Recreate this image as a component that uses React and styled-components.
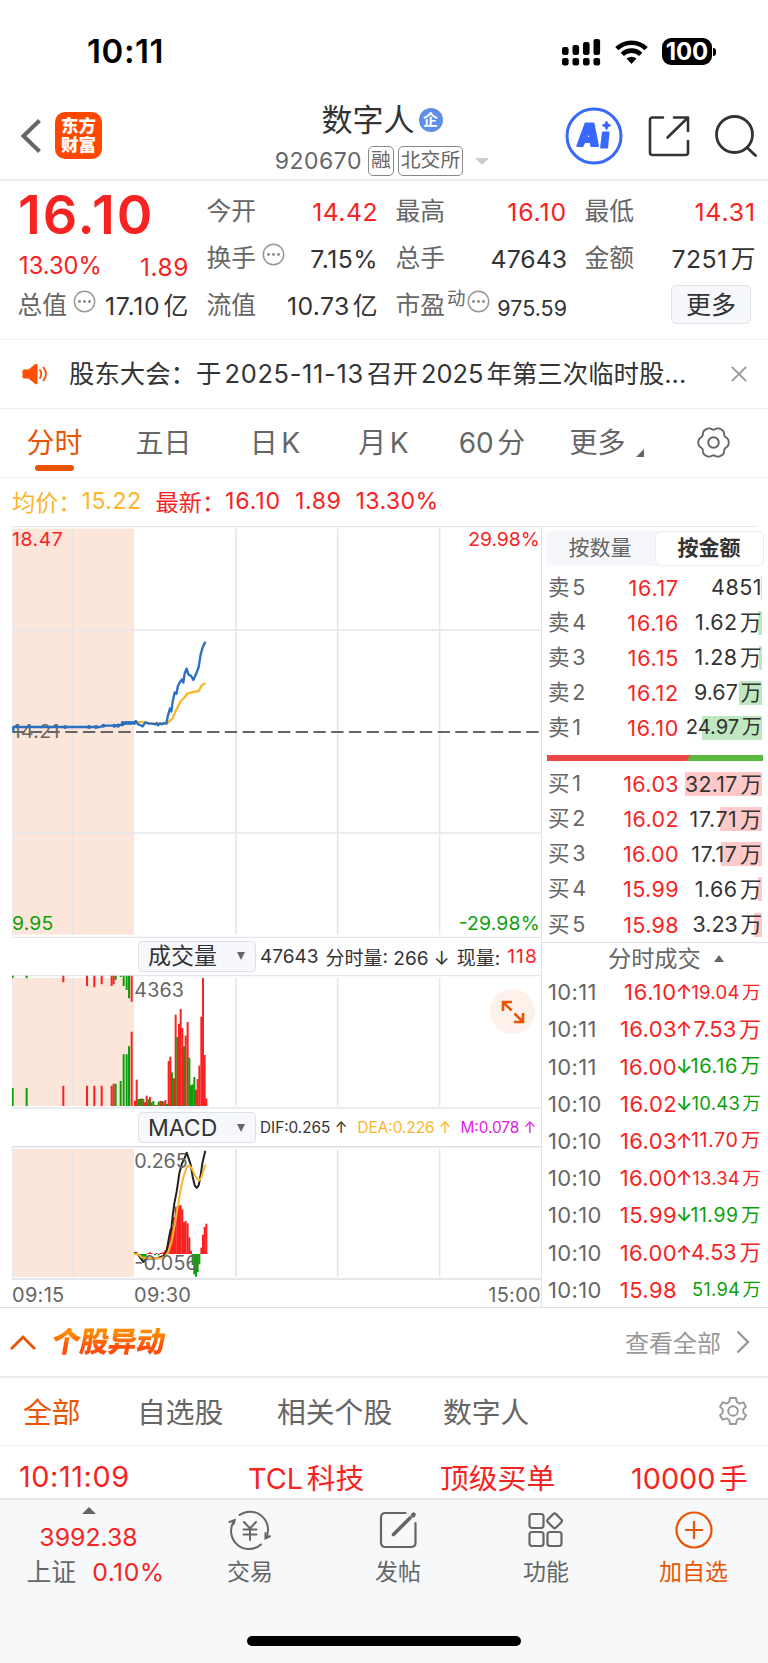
import React from 'react';
import styled, { createGlobalStyle } from 'styled-components';

const RED = '#f72323';
const GREEN = '#0b9f0b';
const ORANGE = '#ea5504';
const GREY = '#666';
const GRID = '#e3e6ec';

const GlobalStyle = createGlobalStyle`
  * {
    box-sizing: border-box;
  }
  body {
    margin: 0;
    background: #fff;
    color: #333;
    font-family: Inter, 'Noto Sans CJK SC', sans-serif;
    text-autospace: normal;
  }
`;

const Page = styled.div`
  display: flex;
  flex-direction: column;
  width: 768px;
  height: 1663px;
  overflow: hidden;
  background: #fff;
  white-space: nowrap;
`;

const Row = styled.div`
  display: flex;
  align-items: center;
`;

const Digits = styled.span`
  letter-spacing: ${props => props.$tracking}em;
`;

/* status bar */

const StatusBar = styled.div`
  display: flex;
  align-items: center;
  justify-content: space-between;
  height: 91px;
  padding: 12px 52px 0 87px;
  flex-shrink: 0;
`;

const Clock = styled.div`
  color: #000;
  font-size: 33px;
  font-weight: 600;
  letter-spacing: 0.6px;
  line-height: 40px;
  padding-bottom: 1px;
`;

const Battery = styled.div`
  display: flex;
  align-items: center;
  justify-content: center;
  width: 50px;
  height: 27px;
  margin-left: 13px;
  border-radius: 9px;
  background: #000;
  color: #fff;
  font-size: 24px;
  font-weight: 700;
  letter-spacing: -0.1px;
`;

const BatteryTip = styled.div`
  width: 3px;
  height: 8px;
  margin-left: 1px;
  border-radius: 0 3px 3px 0;
  background: #000;
`;

/* header */

const Header = styled.div`
  display: grid;
  grid-template-columns: 200px 364px 204px;
  height: 90px;
  border-bottom: 2px solid #ebebeb;
  flex-shrink: 0;
`;

const HeaderLeft = styled.div`
  display: flex;
  align-items: center;
  padding: 1px 0 0 20px;
  gap: 13px;
`;

const AppLogo = styled.div`
  width: 47px;
  height: 47px;
  padding-top: 4px;
  border-radius: 10px;
  background: #ff4700;
  color: #fff;
  font-size: 17.5px;
  font-weight: 900;
  line-height: 19px;
  text-align: center;
`;

const HeaderTitle = styled.div`
  display: flex;
  flex-direction: column;
  align-items: center;
`;

const StockName = styled.div`
  display: flex;
  align-items: center;
  height: 50px;
  padding-top: 2px;
  font-size: 31px;
  gap: 4px;
`;

const Badge = styled.span`
  width: 24px;
  height: 24px;
  margin-top: 5px;
  border-radius: 50%;
  background: #5f8ee8;
  color: #fff;
  font-size: 15px;
  font-weight: 700;
  line-height: 23px;
  text-align: center;
`;

const StockCode = styled.div`
  display: flex;
  align-items: center;
  height: 30px;
  margin-top: 5px;
  color: ${GREY};
  font-size: 23px;
`;

const CodeNumber = styled.span`
  margin-right: 6px;
  letter-spacing: 0.5px;
`;

const Tag = styled.span`
  height: 30px;
  padding: 0 2px;
  margin-right: 4px;
  border: 1.5px solid #888;
  border-radius: 5px;
  font-size: 19.8px;
  line-height: 27px;
`;

const Triangle = styled.span`
  width: 0;
  height: 0;
  margin-left: ${props => props.gap || 0}px;
  border-left: ${props => props.size}px solid transparent;
  border-right: ${props => props.size}px solid transparent;
  ${props => (props.up ? 'border-bottom' : 'border-top')}: ${props =>
      props.tall || props.size}px solid ${props => props.color || GREY};
`;

const HeaderTools = styled.div`
  display: flex;
  align-items: center;
  padding: 2px 0 0 1px;
  gap: 25px;
`;

/* quote */

const Quote = styled.div`
  display: grid;
  grid-template-columns: repeat(4, 169px);
  column-gap: 20px;
  height: 159px;
  padding: 7px 13px 0 19px;
  border-bottom: 1px solid #efefef;
  flex-shrink: 0;
`;

const QuoteColumn = styled.div`
  display: flex;
  flex-direction: column;
`;

const BigPrice = styled.div`
  height: 52px;
  margin-left: -1px;
  color: ${RED};
  font-size: 54px;
  font-weight: 600;
  line-height: 54px;
`;

const Change = styled.div`
  display: flex;
  justify-content: space-between;
  height: 42px;
  margin: 0 -1px 0 0;
  padding-top: 4px;
  color: ${RED};
  font-size: 23.7px;
  line-height: 44px;
`;

const ChangeAmount = styled.span`
  font-size: 24.5px;
  line-height: 46px;
`;

const Stat = styled.div`
  display: flex;
  align-items: center;
  height: 47px;
  margin: 0 -1px 0 -1.5px;
  font-size: ${props => props.size || 24.8}px;
  color: ${props => props.color || '#333'};
`;

const StatLabel = styled.span`
  color: ${GREY};
  font-size: 24.8px;
  line-height: 34px;
  padding-bottom: 1px;
`;

const StatValue = styled.span`
  margin-left: auto;
  line-height: 34px;
  padding-top: ${props => props.drop || 0}px;
`;

const Sup = styled.sup`
  margin-left: 2px;
  color: ${GREY};
  font-size: 18.5px;
  line-height: 20px;
  padding-bottom: 15px;
  vertical-align: baseline;
`;

const DotsIcon = styled.svg`
  margin: 0 0 9px ${props => props.$gap}px;
`;

const MoreButton = styled.button`
  width: 80px;
  height: 39px;
  margin: 3px 4px 0 auto;
  padding: 0;
  border: 1.5px solid #e0e2e9;
  border-radius: 5px;
  background: #f7f8fb;
  color: #333;
  font: inherit;
  font-size: 25px;
  line-height: 34px;
`;

/* notice */

const Notice = styled.div`
  display: flex;
  align-items: center;
  height: 69px;
  padding: 0 21px 0 22px;
  border-bottom: 1px solid #efefef;
  flex-shrink: 0;
`;

const NoticeText = styled.div`
  margin: -4px auto 0 21px;
  font-size: 25.4px;
`;

/* period tabs */

const Tabs = styled.div`
  display: grid;
  grid-template-columns: 109px 109px 114px 103px 114px 97px 122px;
  height: 69px;
  border-bottom: 1px solid #efefef;
  flex-shrink: 0;
`;

const Tab = styled.div`
  display: flex;
  flex-direction: column;
  align-items: center;
  justify-content: center;
  position: relative;
  padding-bottom: 5px;
  color: ${props => (props.active ? ORANGE : GREY)};
  font-size: 28px;

  &::after {
    content: '';
    display: ${props => (props.active ? 'block' : 'none')};
    position: absolute;
    bottom: 6px;
    width: 39px;
    height: 6px;
    border-radius: 3px;
    background: ${ORANGE};
  }
`;

const Corner = styled.span`
  position: absolute;
  right: 2px;
  bottom: 20px;
  border-left: 8px solid transparent;
  border-bottom: 8px solid ${GREY};
`;

const SettingsSlot = styled.div`
  display: flex;
  align-items: center;
  padding: 0 0 2px 51px;
`;

const Legend = styled.div`
  display: flex;
  align-items: center;
  height: 48px;
  padding: 0 0 2px 12px;
  font-size: 23.2px;
  flex-shrink: 0;
`;

const LegendItem = styled.span`
  margin-right: ${props => props.gap || 0}px;
  color: ${props => props.color || RED};
`;

/* chart and order book */

const Main = styled.div`
  display: grid;
  grid-template-columns: 529px 227px;
  height: 782px;
  padding-left: 12px;
  border-bottom: 1px solid #e0e2e8;
  overflow: hidden;
  flex-shrink: 0;
`;

const ChartColumn = styled.div`
  position: relative;
`;

const Pane = styled.svg`
  display: block;
  width: 529px;
  height: ${props => props.$height}px;
`;

const IndicatorBar = styled.div`
  display: flex;
  align-items: center;
  height: 37px;
  padding-left: 126px;
  font-size: ${props => props.size}px;
`;

const Select = styled.div`
  display: flex;
  align-items: center;
  justify-content: space-between;
  width: 118px;
  height: 31px;
  margin-right: 4px;
  padding: 0 10px ${props => props.lift || 0}px 9px;
  border: 1.5px solid #dfe2e9;
  border-radius: 4px;
  background: #f7f8fb;
  font-size: 23px;
  line-height: 26px;
  flex-shrink: 0;
`;

const Reading = styled.span`
  margin-right: ${props => props.gap || 0}px;
  padding-bottom: ${props => props.lift || 0}px;
  color: ${props => props.color || '#333'};
`;

const Expand = styled.div`
  display: flex;
  align-items: center;
  justify-content: center;
  position: absolute;
  left: 478px;
  top: 463px;
  width: 45px;
  height: 45px;
  border-radius: 50%;
  background: #fef1ea;
`;

const TimeAxis = styled.div`
  display: grid;
  grid-template-columns: 122px 1fr auto;
  height: 29px;
  color: ${GREY};
  font-size: 20px;
  line-height: 31px;
  letter-spacing: 0.3px;
`;

const Book = styled.div`
  border-left: 1px solid #e0e2e8;
`;

const BookTop = styled.div`
  width: 215px;
  height: 2px;
  background: linear-gradient(#e3e6ec 1px, transparent 1px);
`;

const Toggle = styled.div`
  display: grid;
  grid-template-columns: 1fr 109px;
  width: 218px;
  height: 35px;
  margin: 3px 0 4px 4px;
  border-radius: 5px;
  background: #f6f7fb;
`;

const ToggleItem = styled.div`
  padding-right: 1px;
  border: 1.5px solid ${props => (props.active ? '#ececee' : 'transparent')};
  border-radius: 6px;
  background: ${props => (props.active ? '#fff' : 'none')};
  color: ${props => (props.active ? '#333' : GREY)};
  font-size: 21px;
  font-weight: ${props => (props.active ? 700 : 400)};
  line-height: 31px;
  text-align: center;
`;

const BookRow = styled.div`
  display: grid;
  grid-template-columns: 51px 80px 83px;
  align-items: center;
  position: relative;
  height: 35.12px;
  padding: 0 0 0 6px;
  font-size: 21.5px;
  line-height: 30px;
`;

const BookLabel = styled.span`
  padding-bottom: 2px;
  color: ${GREY};
`;

const BookPrice = styled.span`
  color: ${RED};
  text-align: right;
`;

const BookVolume = styled.span`
  display: flex;
  justify-content: flex-end;
  position: relative;
  padding-bottom: 1px;
  font-size: ${props => props.size || 21.5}px;
`;

const VolumeBar = styled.span`
  position: absolute;
  right: 6px;
  width: ${props => props.width}px;
  height: 24px;
  background: ${props => (props.buy ? '#fdc9c9' : '#c0e8c0')};
`;

const Ratio = styled.div`
  height: 6px;
  width: 216px;
  margin: 9px 0 6px 5px;
  background: linear-gradient(125deg, #ea4646 65%, #5ab83e 65.5%);
`;

const TradesTitle = styled.div`
  display: flex;
  align-items: center;
  height: 32px;
  padding-left: 66px;
  border-top: 1.5px solid #e0e2e8;
  color: ${GREY};
  font-size: 23.2px;
  line-height: 28px;
  gap: 13px;
`;

const TradeRow = styled.div`
  display: grid;
  grid-template-columns: 52px 77px 14px 70px;
  align-items: center;
  height: 37.2px;
  padding: 0 0 1px 6px;
  color: ${GREY};
  font-size: 22px;
  line-height: 30px;
`;

const TradeTime = styled.span`
  letter-spacing: 0.35px;
`;

const TradePrice = styled.span`
  color: ${RED};
  text-align: right;
`;

const TradeArrow = styled.span`
  display: flex;
  justify-content: center;
  color: ${props => props.color};
  font-size: 19.5px;
  font-weight: 500;
`;

const TradeAmount = styled.span`
  display: flex;
  justify-content: flex-end;
  padding-bottom: 1px;
  color: ${props => props.color};
  font-size: ${props => props.size}px;
`;

/* movers */

const MoversHeader = styled.div`
  display: flex;
  align-items: center;
  height: 70px;
  padding: 0 18px 0 10px;
  border-bottom: 2px solid #ebebed;
  flex-shrink: 0;
`;

const MoversTitle = styled.div`
  margin: 0 auto 0 16px;
  background: linear-gradient(#ff8a00 25%, #ff4e0a 65%);
  background-clip: text;
  color: transparent;
  font-size: 28.7px;
  font-weight: 900;
  letter-spacing: -0.5px;
  line-height: 36px;
  transform: skewX(-10deg);
`;

const SeeAll = styled.span`
  margin: -2px 15px 0 0;
  color: #999;
  font-size: 24px;
`;

const Filters = styled.div`
  display: grid;
  grid-template-columns: 114px 140px 166px 276px auto;
  align-items: center;
  height: 68px;
  padding: 0 0 1px 23px;
  border-bottom: 1px solid #efefef;
  flex-shrink: 0;
`;

const Filter = styled.span`
  padding-bottom: 2px;
  color: ${props => (props.active ? ORANGE : GREY)};
  font-size: 28.8px;
`;

const MoverRow = styled.div`
  display: grid;
  grid-template-columns: 229px 192px 191px 118px;
  align-items: center;
  height: 52px;
  padding: 8px 0 0 19px;
  color: ${RED};
  font-size: 28.8px;
  flex-shrink: 0;
`;

const MoverTime = styled.span`
  padding-top: 1px;
  letter-spacing: 0.6px;
`;

/* bottom bar */

const BottomBar = styled.div`
  display: grid;
  grid-template-columns: 177px 146px 150px 146px 149px;
  position: relative;
  flex: 1;
  border-top: 2px solid #e2e4e8;
  background: #f7f8fa;
`;

const BottomItem = styled.div`
  display: flex;
  flex-direction: column;
  align-items: center;
  padding-top: 9px;
  color: ${props => (props.accent ? ORANGE : GREY)};
  font-size: 23px;
`;

const BottomLabel = styled.span`
  margin-top: 5px;
  line-height: 32px;
`;

const IndexItem = styled.div`
  display: flex;
  flex-direction: column;
  align-items: center;
  padding-top: 7px;
  color: ${RED};
  font-size: 24.8px;
`;

const IndexLine = styled.div`
  height: 35px;
  line-height: 35px;
  padding: ${props => props.drop || 0}px 0 0 ${props => props.shift || 0}px;
`;

const IndexName = styled.span`
  margin-right: 13px;
  color: ${GREY};
`;

const HomeIndicator = styled.div`
  position: absolute;
  left: 247px;
  bottom: 17px;
  width: 274px;
  height: 10px;
  border-radius: 5px;
  background: #000;
`;

/* data */

const sells = [
  ['卖5', '16.17', '4851', 1],
  ['卖4', '16.16', '1.62万', 4],
  ['卖3', '16.15', '1.28万', 3],
  ['卖2', '16.12', '9.67万', 23],
  ['卖1', '16.10', '24.97万', 60, 20.2]
];

const buys = [
  ['买1', '16.03', '32.17万', 77, 21.3],
  ['买2', '16.02', '17.71万', 42, 21.3],
  ['买3', '16.00', '17.17万', 41, 21.3],
  ['买4', '15.99', '1.66万', 4],
  ['买5', '15.98', '3.23万', 8]
];

const trades = [
  ['10:11', '16.10', '↑', '19.04万', 18.6],
  ['10:11', '16.03', '↑', '7.53万', 22],
  ['10:11', '16.00', '↓', '16.16万', 20],
  ['10:10', '16.02', '↓', '10.43万', 18.4],
  ['10:10', '16.03', '↑', '11.70万', 19.6],
  ['10:10', '16.00', '↑', '13.34万', 18.4],
  ['10:10', '15.99', '↓', '11.99万', 19.4],
  ['10:10', '16.00', '↑', '4.53万', 21.6],
  ['10:10', '15.98', '', '51.94万', 18.3]
];

// Chart units are a third of a pixel: [x, top, colour]
const auction = [
  [38, 474, 'g', 144], [80, 474, 'g', 145], [190, 467, 'r', 157],
  [261, 467, 'r', 168], [283, 467, 'r', 172], [305, 467, 'r', 163],
  [335, 467, 'r', 168], [341, 461, 'r', 163], [347, 461, 'g', 150],
  [362, 453, 'g', 141], [371, 373, 'g', 168], [380, 373, 'g', 180],
  [387, 349, 'g', 205], [395, 305, 'r', 215]
];

const volumes = [
  [405, 512, 'r'], [410, 449, 'r'], [415, 507, 'g'], [420, 507, 'g'],
  [425, 505, 'r'], [430, 507, 'g'], [435, 517, 'r'], [440, 497, 'r'],
  [445, 508, 'g'], [450, 501, 'r'], [455, 517, 'g'], [460, 513, 'g'],
  [466, 525, 'g'], [471, 525, 'r'], [476, 515, 'g'], [481, 513, 'r'],
  [486, 513, 'g'], [491, 515, 'r'], [496, 510, 'r'], [501, 522, 'g'],
  [506, 393, 'r'], [511, 380, 'r'], [516, 427, 'g'], [522, 445, 'r'],
  [527, 254, 'r'], [532, 321, 'g'], [537, 281, 'r'], [542, 237, 'r'],
  [547, 294, 'r'], [552, 349, 'g'], [557, 317, 'r'], [563, 276, 'r'],
  [568, 383, 'g'], [573, 466, 'g'], [578, 463, 'g'], [583, 441, 'g'],
  [588, 479, 'r'], [593, 447, 'r'], [598, 407, 'r'], [604, 260, 'r'],
  [609, 144, 'r'], [614, 375, 'r'], [619, 505, 'r']
];

const macd = [
  [417, 980], [422, 986], [427, 991], [432, 988], [437, 980],
  [445, 969], [450, 967], [455, 969], [465, 976], [470, 969], [476, 976],
  [481, 969], [486, 968], [491, 966], [496, 960], [501, 952],
  [506, 935], [511, 898], [516, 892], [522, 862], [527, 830], [532, 836],
  [537, 826], [542, 826], [547, 838], [552, 877], [557, 873], [563, 880],
  [568, 922], [573, 962], [578, 1005], [583, 1033], [588, 1040],
  [593, 1026], [598, 1003], [604, 953], [609, 914], [614, 891], [619, 881]
];

const barColor = c => (c === 'r' ? RED : GREEN);

// Inter draws a narrow 1, so open up the numbers that are full of them
function Num({ children }) {
  const ones = children.split('1').length - 1;
  return (
    <Digits $tracking={((ones * 0.09) / children.length).toFixed(4)}>
      {children}
    </Digits>
  );
}

/* icons */

function Dots({ gap = 6 }) {
  return (
    <DotsIcon $gap={gap} width="23" height="23" viewBox="0 0 23 23">
      <circle cx="11.5" cy="11.5" r="10.2" fill="none" stroke="#999" strokeWidth="1.5" />
      <circle cx="6.5" cy="11.5" r="1.4" fill="#888" />
      <circle cx="11.5" cy="11.5" r="1.4" fill="#888" />
      <circle cx="16.5" cy="11.5" r="1.4" fill="#888" />
    </DotsIcon>
  );
}

function SignalIcons() {
  return (
    <svg width="88" height="28" viewBox="0 0 88 28">
      {[9, 7, 4, 1].map((y, i) => (
        <g key={y}>
          <rect x={1 + i * 10.5} y={y} width="6.6" height={17 - y} rx="2.2" />
          <rect x={1 + i * 10.5} y="20" width="6.6" height="7.4" rx="2.2" />
        </g>
      ))}
      <g fill="none" stroke="#000" strokeWidth="4.6">
        <path d="M55.8 10.6a21.2 21.2 0 0 1 29.4 0" />
        <path d="M61.3 16.3a13.4 13.4 0 0 1 18.4 0" />
      </g>
      <path d="M65.6 20.6a7.2 7.2 0 0 1 9.8 0L70.5 26z" />
    </svg>
  );
}

function HeaderIcons() {
  return (
    <>
      <svg width="58" height="58" viewBox="0 0 58 58">
        <circle cx="29" cy="29" r="27" fill="none" stroke="#3868ff" strokeWidth="3" />
        <g fill="#3868ff" stroke="#3868ff" strokeWidth="2" strokeLinejoin="round">
          <path
            fillRule="evenodd"
            d="M20.500 16.500h8l4.500 22.500h-6.600l-.7-4h-6.200L17.500 39h-5.200zM24.500 23.600l-3 7.400h3.800z"
          />
          <path d="M38 25.500h5.500l-1.400 15h-6z" />
          <path d="M41.500 15l1 2.400 2.400 1-2.400 1-1 2.400-1-2.400-2.400-1 2.400-1z" />
        </g>
      </svg>
      <svg width="42" height="42" viewBox="0 0 42 42" fill="none" stroke="#333" strokeWidth="2.600" strokeLinecap="round" strokeLinejoin="round">
        <path d="M15 2.500H4.500Q2 2.500 2 5v32.500Q2 40 4.500 40h33Q40 40 40 37.500V26" />
        <path d="M26 2.500h14V16M39.500 3L19.500 22.500" />
      </svg>
      <svg width="42" height="42" viewBox="0 0 42 42" fill="none" stroke="#333" strokeWidth="2.800" strokeLinecap="round">
        <circle cx="19.500" cy="19.500" r="18" />
        <path d="M32 32.500l8.500 8" />
      </svg>
    </>
  );
}

function Speaker() {
  return (
    <svg width="26" height="22" viewBox="0 0 26 22">
      <path d="M2 6.500h4.500L13 1.200q2.500-1.400 2.500 1v17.600q0 2.400-2.500 1L6.500 15.500H2Q.5 15.500.5 14V8Q.5 6.500 2 6.500z" fill="#ff4e00" />
      <path d="M18 7q2.600 4 0 8M21.500 4.500q5 6.500 0 13" fill="none" stroke="#ff4e00" strokeWidth="1.800" strokeLinecap="round" />
    </svg>
  );
}

// Six soft lobes, traced in polar coordinates
const lobes = Array.from({ length: 72 }, (_, i) => {
  const a = (i * Math.PI) / 36;
  const r = 14.3 + 1.2 * Math.cos(6 * a) - 0.3 * Math.cos(12 * a);
  return `${(16.5 + r * Math.cos(a)).toFixed(2)},${(16.5 + r * Math.sin(a)).toFixed(2)}`;
}).join(' ');

function HexGear() {
  return (
    <svg width="33" height="33" viewBox="0 0 33 33" fill="none" stroke={GREY} strokeWidth="1.900" strokeLinejoin="round">
      <polygon points={lobes} />
      <circle cx="16.500" cy="16.500" r="5.300" />
    </svg>
  );
}

function CogIcon() {
  return (
    <svg width="28" height="28" viewBox="0 0 28 28" fill="none" stroke="#999" strokeWidth="1.900" strokeLinejoin="round">
      <path d="M11 1h6l.8 4 2.600 1.600 4-1.300 2.600 4.400-2.700 2.700v3.200l2.700 2.700-2.600 4.400-4-1.300-2.600 1.600-.8 4h-6l-.8-4-2.600-1.600-4 1.300L1 18.300l2.700-2.700v-3.200L1 9.700l2.600-4.400 4 1.300L10.200 5z" />
      <circle cx="14" cy="14" r="4.800" />
    </svg>
  );
}

function Grid({ top, bottom, left }) {
  return (
    <g>
      <rect x={left} y={top} width={402 - left} height={bottom - top} fill="#fce6da" />
      <path d={`M219 ${top}V${bottom}M708 ${top}V${bottom}M1013 ${top}V${bottom}`} stroke={GRID} strokeWidth="5" />
      <path d={`M1319 ${top}V${bottom}`} stroke={GRID} strokeWidth="4" />
      <path d={`M38 ${top - 6}V${bottom + 4}`} stroke={GRID} strokeWidth="3" />
    </g>
  );
}

function PricePane() {
  return (
    <Pane $height={412} viewBox="36 33 1587 1236">
      <Grid top={41} bottom={1259} left={38} />
      <path d="M36 35H1623M36 1267H1623" stroke={GRID} strokeWidth="4" />
      <path d="M38 345H1623M38 954H1623" stroke={GRID} strokeWidth="5" />
      <g fontSize="58">
        <text x="36" y="93" fill={RED} textLength="152">18.47</text>
        <text x="1405" y="93" fill={RED} textLength="214">29.98%</text>
        <text x="36" y="1245" fill={GREEN} textLength="124">9.95</text>
        <text x="1376" y="1245" fill={GREEN} textLength="243">-29.98%</text>
        <text x="38" y="669" fill={GREY} textLength="140">14.21</text>
      </g>
      <path d="M38 651H1623" stroke={GREY} strokeWidth="6" strokeDasharray="37 16.2" strokeDashoffset="2" />
      <g fill="none" strokeWidth="7" strokeLinejoin="round">
        <path
          d="M403 622L428 621L445 626L470 626L500 626L518 610L526 590L534 575L541 560L552 549L562 536L572 533L596 528L605 512L616 504"
          stroke="#fdb52c"
        />
        <path
          d="M40 652V636H300L312 632H345L352 630L368 630L378 623H402L408 618L414 628L420 630L428 634L436 622L446 625L456 626L466 628L470 624L474 631L480 625L486 628L492 624L499 626L503 605L510 580L514 590L518 560L524 532L529 537L534 512L540 501L546 493L550 503L554 475L560 461L565 478L574 484L580 495L588 478L596 456L602 418L608 397L616 380"
          stroke="#2a6fc0"
        />
      </g>
      {[196, 267, 288, 310, 343, 354, 368, 376, 384, 392, 402].map((x, i) => (
        <circle key={x} cx={x} cy={i < 3 ? 636 : i < 6 ? 632 : 624} r="6" fill="#2a6fc0" />
      ))}
    </Pane>
  );
}

function VolumePane() {
  return (
    <Pane $height={134} viewBox="36 135 1587 402">
      <Grid top={144} bottom={528} left={38} />
      <path d="M36 137H1623M36 534H1623" stroke={GRID} strokeWidth="4" />
      {auction.map(([x, top, c, drop]) => (
        <path key={x} d={`M${x} ${top}V528M${x} 137V${drop}`} stroke={barColor(c)} strokeWidth="6" />
      ))}
      {volumes.map(([x, top, c]) => (
        <path key={x} d={`M${x} ${top}V528`} stroke={barColor(c)} strokeWidth="6" />
      ))}
      <text x="403" y="201" fontSize="59" fill={GREY} textLength="149">4363</text>
    </Pane>
  );
}

function MacdPane() {
  return (
    <Pane $height={134} viewBox="36 648 1587 402">
      <Grid top={657} bottom={1041} left={38} />
      <path d="M36 650H1623M36 1047H1623" stroke="#dcdfe6" strokeWidth="4.500" />
      {macd.map(([x, end]) => (
        <path key={x} d={`M${x} 972V${end}`} stroke={end > 972 ? GREEN : RED} strokeWidth="6" />
      ))}
      <g fill="none" strokeWidth="6" strokeLinejoin="round">
        <path
          d="M402 971L408 968L416 976L430 996L440 986L470 985L490 978L499 966L504 940L509 912L514 895L518 858L523 820L530 785L538 730L546 700L554 684L560 668L566 686L572 704L578 740L584 766L590 774L596 766L602 735L608 695L616 662"
          stroke="#222"
        />
        <path
          d="M402 972L412 971L425 982L440 985L480 985L495 980L505 965L515 935L525 880L535 820L544 768L552 735L560 712L568 706L575 715L588 742L596 752L604 743L612 715L617 704"
          stroke="#fdb52c"
        />
      </g>
      <text x="403" y="714" fontSize="59" fill={GREY} textLength="160">0.265</text>
      <text x="403" y="1020" fontSize="59" fill={GREY} textLength="190">-0.056</text>
    </Pane>
  );
}

function BookRows({ rows, buy }) {
  return rows.map(([label, price, volume, width, size]) => (
    <BookRow key={label}>
      <BookLabel>{label}</BookLabel>
      <BookPrice>
        <Num>{price}</Num>
      </BookPrice>
      <VolumeBar width={width} buy={buy} />
      <BookVolume size={size}>
        <Num>{volume}</Num>
      </BookVolume>
    </BookRow>
  ));
}

function App() {
  return (
    <Page>
      <GlobalStyle />
      <StatusBar>
        <Clock>10:11</Clock>
        <Row>
          <SignalIcons />
          <Battery>100</Battery>
          <BatteryTip />
        </Row>
      </StatusBar>

      <Header>
        <HeaderLeft>
          <svg width="22" height="36" viewBox="0 0 22 36" fill="none" stroke="#666" strokeWidth="4">
            <path d="M19.500 2.500L3.500 18l16 15.500" />
          </svg>
          <AppLogo>
            东方
            <br />
            财富
          </AppLogo>
        </HeaderLeft>
        <HeaderTitle>
          <StockName>
            数字人<Badge>企</Badge>
          </StockName>
          <StockCode>
            <CodeNumber>920670</CodeNumber>
            <Tag>融</Tag>
            <Tag>北交所</Tag>
            <Triangle size={7} color="#ccc" gap={8} />
          </StockCode>
        </HeaderTitle>
        <HeaderTools>
          <HeaderIcons />
        </HeaderTools>
      </Header>

      <Quote>
        <QuoteColumn>
          <BigPrice>
            <Num>16.10</Num>
          </BigPrice>
          <Change>
            <span>13.30%</span>
            <ChangeAmount>
              <Num>1.89</Num>
            </ChangeAmount>
          </Change>
          <Stat>
            <StatLabel>总值</StatLabel>
            <Dots />
            <StatValue>
              <Num>17.10亿</Num>
            </StatValue>
          </Stat>
        </QuoteColumn>
        <QuoteColumn>
          <Stat color={RED}>
            <StatLabel>今开</StatLabel>
            <StatValue>
              <Num>14.42</Num>
            </StatValue>
          </Stat>
          <Stat>
            <StatLabel>换手</StatLabel>
            <Dots />
            <StatValue>
              <Num>7.15%</Num>
            </StatValue>
          </Stat>
          <Stat>
            <StatLabel>流值</StatLabel>
            <StatValue>
              <Num>10.73亿</Num>
            </StatValue>
          </Stat>
        </QuoteColumn>
        <QuoteColumn>
          <Stat color={RED}>
            <StatLabel>最高</StatLabel>
            <StatValue>
              <Num>16.10</Num>
            </StatValue>
          </Stat>
          <Stat>
            <StatLabel>总手</StatLabel>
            <StatValue>47643</StatValue>
          </Stat>
          <Stat size={21.5}>
            <StatLabel>市盈</StatLabel>
            <Sup>动</Sup>
            <Dots gap={1} />
            <StatValue drop={5}>975.59</StatValue>
          </Stat>
        </QuoteColumn>
        <QuoteColumn>
          <Stat color={RED}>
            <StatLabel>最低</StatLabel>
            <StatValue>
              <Num>14.31</Num>
            </StatValue>
          </Stat>
          <Stat>
            <StatLabel>金额</StatLabel>
            <StatValue>
              <Num>7251万</Num>
            </StatValue>
          </Stat>
          <MoreButton>更多</MoreButton>
        </QuoteColumn>
      </Quote>

      <Notice>
        <Speaker />
        <NoticeText>
          股东大会：于<Num>2025-11-13</Num>召开2025年第三次临时股...
        </NoticeText>
        <svg width="16" height="16" viewBox="0 0 16 16" stroke="#999" strokeWidth="1.900">
          <path d="M.8.8l14.400 14.400M15.200.8L.8 15.200" />
        </svg>
      </Notice>

      <Tabs>
        <Tab active>分时</Tab>
        <Tab>五日</Tab>
        <Tab>日K</Tab>
        <Tab>月K</Tab>
        <Tab>60分</Tab>
        <Tab>
          更多
          <Corner />
        </Tab>
        <SettingsSlot>
          <HexGear />
        </SettingsSlot>
      </Tabs>

      <Legend>
        <LegendItem color="#fdb52c">均价：</LegendItem>
        <LegendItem color="#fdb52c" gap={14}>
          <Num>15.22</Num>
        </LegendItem>
        <LegendItem>最新：</LegendItem>
        <LegendItem gap={14}>
          <Num>16.10</Num>
        </LegendItem>
        <LegendItem gap={14}>
          <Num>1.89</Num>
        </LegendItem>
        <LegendItem>
          <Num>13.30%</Num>
        </LegendItem>
      </Legend>

      <Main>
        <ChartColumn>
          <PricePane />
          <IndicatorBar size={19}>
            <Select lift={2}>
              成交量 <Triangle size={4.5} tall={8} />
            </Select>
            <Reading gap={7}>47643</Reading>
            <Reading gap={7} lift={1}>分时量: 266 ↓</Reading>
            <Reading gap={7} lift={1}>现量:</Reading>
            <Reading color={RED}>
              <Num>118</Num>
            </Reading>
          </IndicatorBar>
          <VolumePane />
          <IndicatorBar size={15.3}>
            <Select>
              MACD <Triangle size={4.5} tall={8} />
            </Select>
            <Reading gap={10}>DIF:0.265 ↑</Reading>
            <Reading gap={9} color="#fdb52c">DEA:0.226 ↑</Reading>
            <Reading color="#e020e6">M:0.078 ↑</Reading>
          </IndicatorBar>
          <MacdPane />
          <TimeAxis>
            <span>09:15</span>
            <span>09:30</span>
            <span>15:00</span>
          </TimeAxis>
          <Expand>
            <svg width="24" height="24" viewBox="0 0 24 24" fill="none" stroke={ORANGE} strokeWidth="2.600">
              <path d="M2 11V2h9M2.500 2.500l8 8M22 13v9h-9M21.500 21.500l-8-8" />
            </svg>
          </Expand>
        </ChartColumn>
        <Book>
          <BookTop />
          <Toggle>
            <ToggleItem>按数量</ToggleItem>
            <ToggleItem active>按金额</ToggleItem>
          </Toggle>
          <BookRows rows={sells} />
          <Ratio />
          <BookRows rows={buys} buy />
          <TradesTitle>
            分时成交 <Triangle up size={5.5} tall={7} />
          </TradesTitle>
          {trades.map(([time, price, arrow, amount, size], i) => (
            <TradeRow key={i}>
              <TradeTime>{time}</TradeTime>
              <TradePrice>
                <Num>{price}</Num>
              </TradePrice>
              <TradeArrow color={arrow === '↑' ? RED : GREEN}>{arrow}</TradeArrow>
              <TradeAmount size={size} color={arrow === '↑' ? RED : GREEN}>
                <Num>{amount}</Num>
              </TradeAmount>
            </TradeRow>
          ))}
        </Book>
      </Main>

      <MoversHeader>
        <svg width="26" height="18" viewBox="0 0 26 18" fill="none" stroke={ORANGE} strokeWidth="3">
          <path d="M1 16L13 4l12 12" />
        </svg>
        <MoversTitle>个股异动</MoversTitle>
        <SeeAll>查看全部</SeeAll>
        <svg width="14" height="24" viewBox="0 0 14 24" fill="none" stroke="#999" strokeWidth="2.400">
          <path d="M1.500 1.500L12 12 1.500 22.500" />
        </svg>
      </MoversHeader>
      <Filters>
        <Filter active>全部</Filter>
        <Filter>自选股</Filter>
        <Filter>相关个股</Filter>
        <Filter>数字人</Filter>
        <CogIcon />
      </Filters>
      <MoverRow>
        <MoverTime>10:11:09</MoverTime>
        <span>TCL科技</span>
        <span>顶级买单</span>
        <span>10000手</span>
      </MoverRow>

      <BottomBar>
        <IndexItem>
          <Triangle up size={7} />
          <IndexLine drop={6}>3992.38</IndexLine>
          <IndexLine drop={6} shift={14}>
            <IndexName>上证</IndexName>
            <Num>0.10%</Num>
          </IndexLine>
        </IndexItem>
        <BottomItem>
          <svg width="44" height="42" viewBox="0 0 44 42" fill="none" stroke={GREY} strokeWidth="2" strokeLinecap="round">
            <path d="M11.500 6A18 18 0 0 1 39 26.500M33 35.500A18 18 0 0 1 5.500 13" />
            <path d="M1.500 13l5.200-2-1 4M37.500 28.500l5-1.500-5 2.500V24" />
            <path d="M16 13l6 6.500 6-6.500M22 19.500V31M15.500 20.500h13M15.500 25.500h13" />
          </svg>
          <BottomLabel>交易</BottomLabel>
        </BottomItem>
        <BottomItem>
          <svg width="38" height="42" viewBox="0 0 38 42" fill="none" stroke={GREY} strokeWidth="2.200" strokeLinecap="round">
            <path d="M26.500 4H6.500Q2 4 2 8.500v25Q2 38 6.500 38h25.500Q36.500 38 36.500 33.500V14" />
            <path d="M14.500 25.500L31 9" strokeWidth="3.600" />
            <path d="M34 6.300l.6-.6" strokeWidth="4.500" />
          </svg>
          <BottomLabel>发帖</BottomLabel>
        </BottomItem>
        <BottomItem>
          <svg width="36" height="42" viewBox="0 0 36 42" fill="none" stroke={GREY} strokeWidth="2.200">
            <rect x="1.500" y="5" width="14" height="14" rx="2.500" />
            <rect x="1.500" y="23" width="14" height="14" rx="2.500" />
            <rect x="19.500" y="23" width="14" height="14" rx="2.500" />
            <rect x="20.800" y="6.100" width="11.500" height="11.500" rx="2" transform="rotate(45 26.600 11.900)" />
          </svg>
          <BottomLabel>功能</BottomLabel>
        </BottomItem>
        <BottomItem accent>
          <svg width="38" height="42" viewBox="0 0 38 42" fill="none" stroke={ORANGE} strokeWidth="2.200">
            <circle cx="19" cy="21" r="17.500" />
            <path d="M19 12v18M10 21h18" />
          </svg>
          <BottomLabel>加自选</BottomLabel>
        </BottomItem>
        <HomeIndicator />
      </BottomBar>
    </Page>
  );
}

export default App;
